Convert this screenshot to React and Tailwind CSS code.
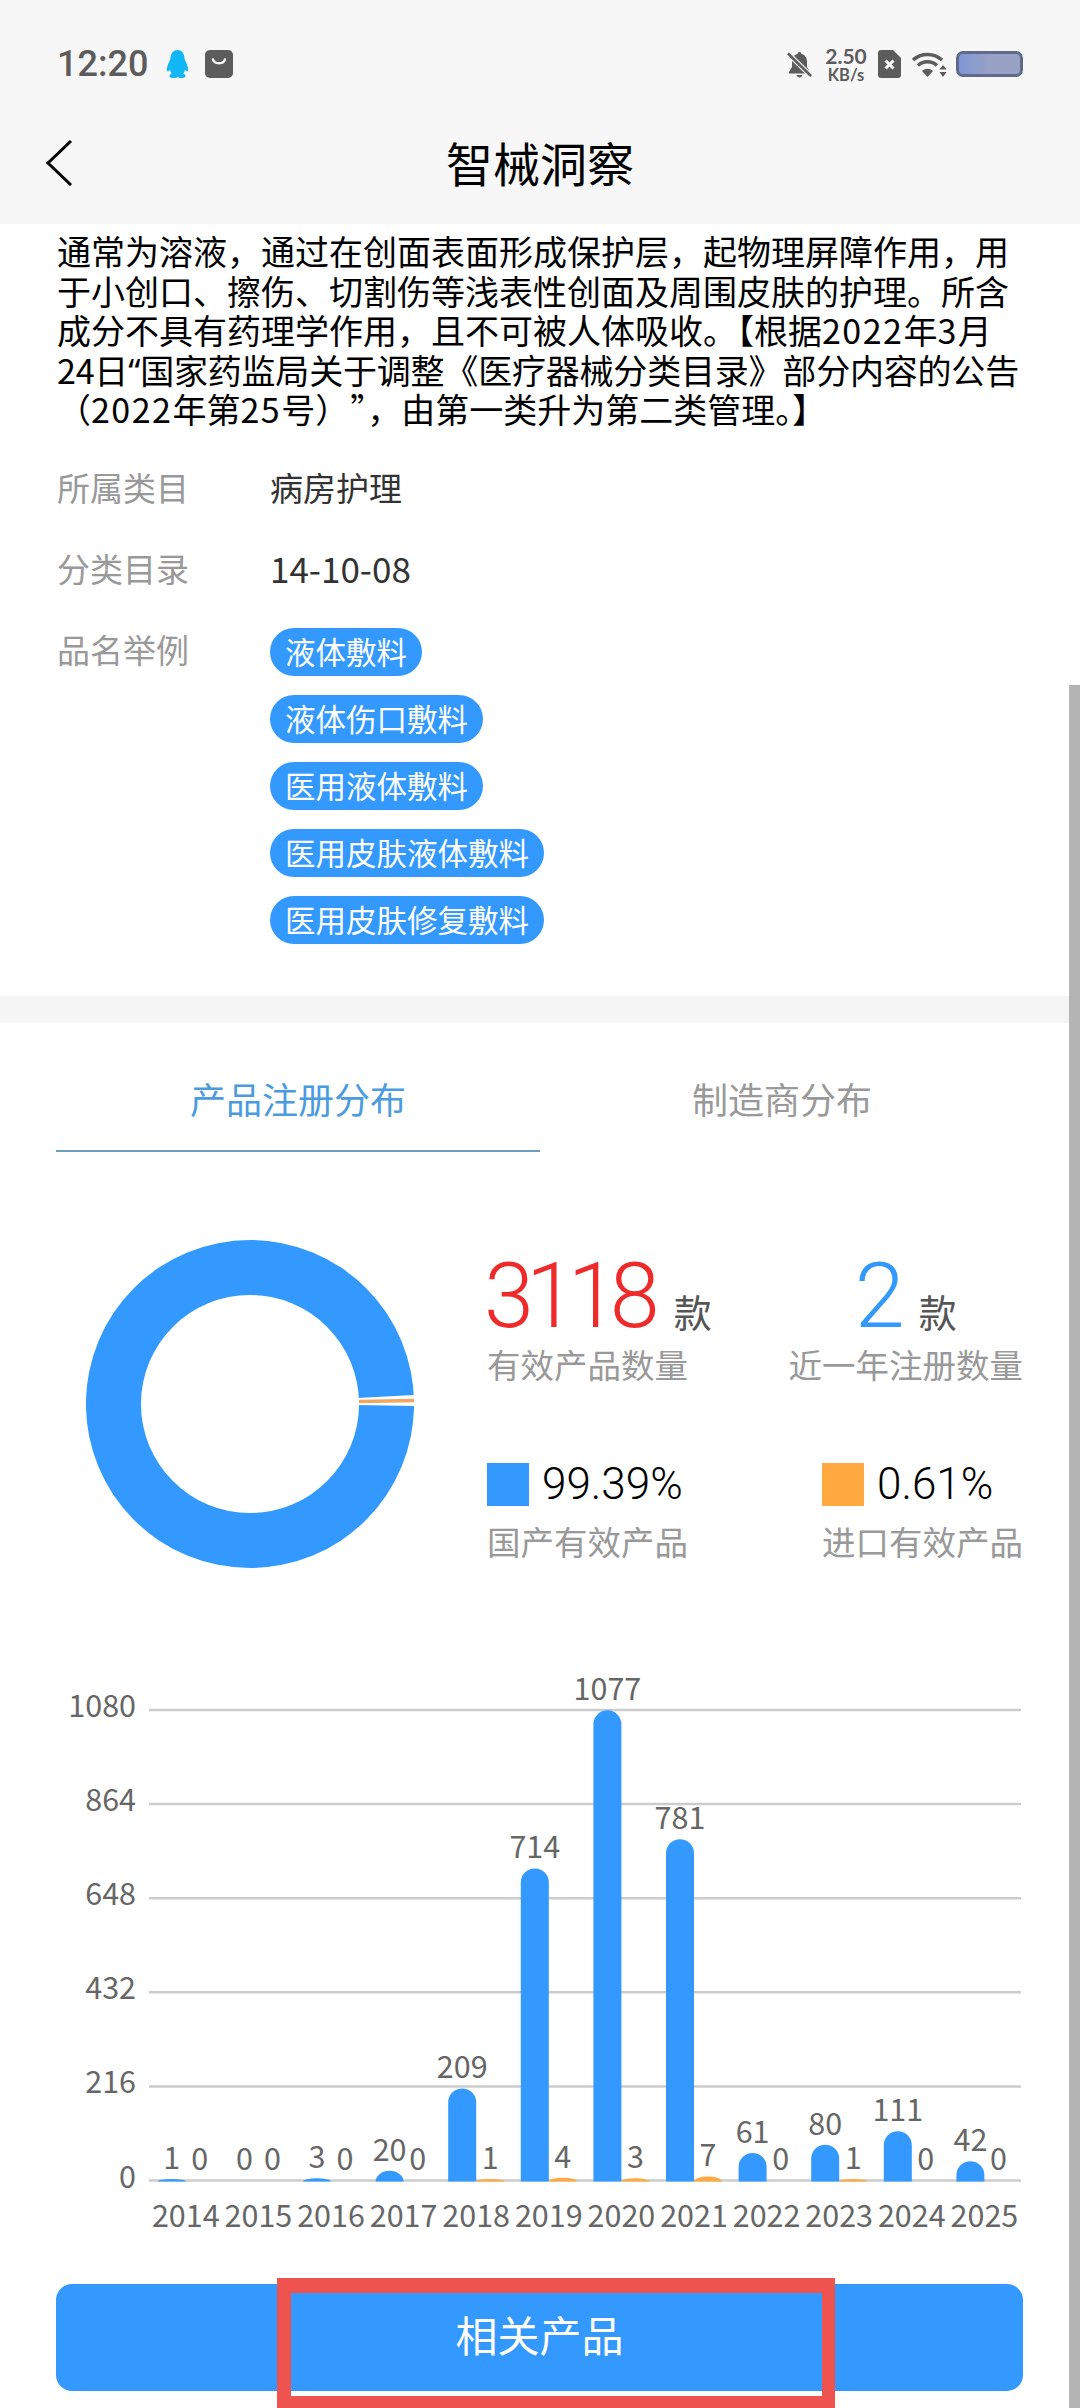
const cjk = "font-['Noto_Sans_CJK_SC','Noto_Sans',sans-serif]";

const comma = "\uFF0C";
const parenL = "\uFF08";
const parenR = "\uFF09";

const tags = ["液体敷料", "液体伤口敷料", "医用液体敷料", "医用皮肤液体敷料", "医用皮肤修复敷料"];

const chartData = [
  [2014, 1, 0],
  [2015, 0, 0],
  [2016, 3, 0],
  [2017, 20, 0],
  [2018, 209, 1],
  [2019, 714, 4],
  [2020, 1077, 3],
  [2021, 781, 7],
  [2022, 61, 0],
  [2023, 80, 1],
  [2024, 111, 0],
  [2025, 42, 0],
];

const yTicks = [1080, 864, 648, 432, 216, 0];

function barPath(cx, top, bottom) {
  const h = bottom - top;
  const ry = Math.min(14, h);
  return `M${cx - 14} ${bottom}V${top + ry}A14 ${ry} 0 0 1 ${cx + 14} ${top + ry}V${bottom}Z`;
}

function StatusBar() {
  return (
    <div className="flex h-[102px] items-start pl-[57px] pr-[57px] pt-[39px]">
      <div className="flex h-[50px] items-center">
        <span className="w-[109px] font-['Roboto',sans-serif] text-[36px] font-medium text-[#5c5c5c]">12:20</span>
        {/* QQ */}
        <svg width="23" height="28" viewBox="0 0 23 28">
          <path d="M11.5 0C6.5 0 4.6 4 4.4 9 3.6 11 1.6 14.5 1 18c-.3 2.2 0 3.5 1 3.4.6 0 1.3-.8 1.8-1.6.4 1.4 1 2.6 2 3.6C4.500 24 3 25 3.500 26.500c.4 1.200 2.500 1.500 4.500 1.500 1.500 0 2.800-.5 3.500-1.300.7.8 2 1.300 3.500 1.300 2 0 4.100-.3 4.500-1.500C20 25 18.500 24 17.200 23.400c1-1 1.600-2.200 2-3.600.5.8 1.200 1.600 1.800 1.600 1 .1 1.300-1.200 1-3.400-.6-3.500-2.600-7-3.400-9C18.400 4 16.500 0 11.500 0Z" fill="#12b7f5" />
        </svg>
        <svg className="ml-[16px]" width="28" height="28" viewBox="0 0 28 28">
          <rect width="28" height="28" rx="5" fill="#5c5c5c" />
          <path d="M8 9.500c1.500 5 10.500 5 12 0" fill="none" stroke="#fff" strokeWidth="2.500" strokeLinecap="round" />
        </svg>
      </div>
      <div className="ml-auto flex h-[50px] items-center">
        {/* muted bell */}
        <svg width="25" height="27" viewBox="0 0 25 27">
          <path d="M12.500 1c-1.200 0-2 .8-2 2C6.500 4 5 7 5 11v5l-3 5v1.500h21V21l-3-5v-5c0-4-1.500-7-5.500-8 0-1.200-.8-2-2-2ZM9.500 24c.5 1.500 1.600 2.500 3 2.500s2.500-1 3-2.500Z" fill="#5c5c5c" />
          <path d="M1 2.500 24 25" stroke="#f7f7f7" strokeWidth="5" />
          <path d="M1 2.500 24 25" stroke="#5c5c5c" strokeWidth="2.500" />
        </svg>
        <div className="ml-[11px] flex w-[46px] flex-col items-center font-['Lato',sans-serif] font-bold text-[#5c5c5c]">
          <span className="text-[21px] leading-[22px]">2.50</span>
          <span className="text-[16.500px] leading-[17px]">KB/s</span>
        </div>
        <svg className="ml-[9px]" width="23" height="28" viewBox="0 0 23 28">
          <path d="M3 0h12l8 8v17a3 3 0 0 1-3 3H3a3 3 0 0 1-3-3V3a3 3 0 0 1 3-3Z" fill="#5c5c5c" />
          <path d="M7.500 10.500l8 8M15.500 10.500l-8 8" stroke="#fff" strokeWidth="3" />
        </svg>
        <svg className="ml-[11px]" width="35" height="27" viewBox="0 0 35 27">
          <path d="M1 9C9 1.500 22 1.500 30 9" fill="none" stroke="#5c5c5c" strokeWidth="3.500" />
          <path d="M6 14.500c5.500-5 13.500-5 19 0" fill="none" stroke="#5c5c5c" strokeWidth="3.500" />
          <path d="M10 20c3.500-3 7.500-3 11 0l-5.500 6Z" fill="#5c5c5c" />
          <path d="M31 14l3.500 4.500h-7ZM31 26l3.500-5h-7Z" fill="#5c5c5c" />
        </svg>
        <div className="ml-[9px] h-[26px] w-[67px] rounded-[7px] border-[3px] border-[#5f6a8c] bg-gradient-to-r from-[#7f97d6] via-[#99a1c6] to-[#99a1c6]" />
      </div>
    </div>
  );
}

function NavBar() {
  return (
    <div className="grid h-[122px] grid-cols-[1fr_auto_1fr] items-center pb-[4px]">
      <svg className="ml-[45px] mt-[4px]" width="29" height="48" viewBox="0 0 29 48">
        <path d="M26 2 3 24l23 22" fill="none" stroke="#000" strokeWidth="3" />
      </svg>
      <span className="text-[47px] leading-none text-black">智械洞察</span>
    </div>
  );
}

function InfoRow({ label, children }) {
  return (
    <div className="flex min-h-[48px]">
      <span className="h-[48px] w-[213px] shrink-0 text-[33px] leading-[46px] text-[#999]">{label}</span>
      {children}
    </div>
  );
}

function Details() {
  const quote = "font-['Noto_Sans',sans-serif] leading-none";
  const digits = "tracking-[1.500px]";
  return (
    <div className="px-[57px] pb-[52px] pt-[7px]">
      <div className="whitespace-nowrap text-[34px] leading-[39.500px] text-black">
        <div>{`通常为溶液${comma}通过在创面表面形成保护层${comma}起物理屏障作用${comma}用`}</div>
        <div>于小创口、擦伤、切割伤等浅表性创面及周围皮肤的护理。所含</div>
        <div>
          {`成分不具有药理学作用${comma}且不可被人体吸收。【根据`}
          <span className={digits}>2022</span>年<span className={digits}>3</span>月
        </div>
        <div className="tracking-[-0.200px]">24日<span className={quote}>“</span>国家药监局关于调整《医疗器械分类目录》部分内容的公告</div>
        <div>
          {parenL}
          <span className={digits}>2022</span>年第<span className={digits}>25</span>
          {`号${parenR}`}
          <span className="ml-[18px]">{`”${comma}由第一类升为第二类管理。】`}</span>
        </div>
      </div>
      <div className="mt-[35.500px] flex flex-col gap-[33px]">
        <InfoRow label="所属类目">
          <span className="text-[33px] leading-[46px] text-[#333]">病房护理</span>
        </InfoRow>
        <InfoRow label="分类目录">
          <span className="text-[35px] leading-[46px] text-[#333]">14-10-08</span>
        </InfoRow>
        <InfoRow label="品名举例">
          <div className="flex flex-col items-start gap-[19px] pt-[2px]">
            {tags.map((tag) => (
              <span key={tag} className="h-[48px] rounded-full bg-[#3399ff] px-[15px] text-[30.500px] leading-[46px] text-white">
                {tag}
              </span>
            ))}
          </div>
        </InfoRow>
      </div>
    </div>
  );
}

function Tabs() {
  return (
    <div className="flex h-[129px] px-[56px]">
      <div className="w-[484px] border-b-2 border-[#6a9fc0] pt-[49px] text-center text-[36px] leading-[52px] text-[#4a9be0]">
        产品注册分布
      </div>
      <div className="w-[484px] pt-[49px] text-center text-[36px] leading-[52px] text-[#999]">
        制造商分布
      </div>
    </div>
  );
}

function Donut() {
  return (
    <svg className="shrink-0" width="328" height="328" viewBox="0 0 328 328">
      <path d="M164 0a164 164 0 1 0 0 328a164 164 0 1 0 0-328ZM164 55a109 109 0 1 1 0 218a109 109 0 1 1 0-218Z" fill="#3399ff" fillRule="evenodd" />
      <path d="M272 158 329 155V166L272 165Z" fill="#fff" />
      <path d="M273 161.500 329 160.500" stroke="#f0a860" strokeWidth="3.500" />
    </svg>
  );
}

function Stats() {
  return (
    <div className="mt-[88px] flex pl-[86px]">
      <Donut />
      <div className="ml-[73px] w-[536px] pt-[12px]">
        <div className="flex justify-between">
          <div>
            <div className="flex h-[90px] items-baseline">
              <span className="ml-[-3px] font-['Roboto',sans-serif] text-[90px] font-light leading-[90px] tracking-[-8px] text-[#ee2a2a]">3118</span>
              <span className="ml-[22px] text-[38px] leading-none text-[#555]">款</span>
            </div>
            <div className="h-[44px] text-[33.500px] leading-[44px] text-[#999]">有效产品数量</div>
          </div>
          <div className="flex flex-col items-center">
            <div className="flex h-[90px] items-baseline">
              <span className="font-['Roboto',sans-serif] text-[90px] font-light leading-[90px] text-[#3399ff]">2</span>
              <span className="ml-[14px] text-[38px] leading-none text-[#555]">款</span>
            </div>
            <div className="h-[44px] text-[33.500px] leading-[44px] text-[#999]">近一年注册数量</div>
          </div>
        </div>
        <div className="mt-[76px] flex justify-between">
          <div>
            <div className="flex h-[44px] items-center">
              <span className="h-[43px] w-[42px] bg-[#3399ff]" />
              <span className="ml-[13px] font-['Roboto',sans-serif] text-[44px] font-light leading-none text-black">99.39%</span>
            </div>
            <div className="mt-[13px] h-[44px] text-[33.500px] leading-[44px] text-[#999]">国产有效产品</div>
          </div>
          <div>
            <div className="flex h-[44px] items-center">
              <span className="h-[43px] w-[42px] bg-[#ffa940]" />
              <span className="ml-[13px] font-['Roboto',sans-serif] text-[44px] font-light leading-none text-black">0.61%</span>
            </div>
            <div className="mt-[13px] h-[44px] text-[33.500px] leading-[44px] text-[#999]">进口有效产品</div>
          </div>
        </div>
      </div>
    </div>
  );
}

function Chart() {
  const base = 2180.5;
  const unit = 470.5 / 1080;
  const textProps = { fontFamily: "'Noto Sans CJK SC', sans-serif", fontSize: 30.5, fill: "#666" };

  return (
    <svg className="mt-[102px] block" width="1080" height="570" viewBox="0 1670 1080 570">
      {yTicks.map((tick) => {
        const y = base - tick * unit;
        return (
          <g key={tick}>
            <line x1="149" x2="1021" y1={y} y2={y} stroke="#ccc" strokeWidth="2.500" />
            <text x="136" y={y + 7} textAnchor="end" {...textProps}>{tick}</text>
          </g>
        );
      })}
      {chartData.map(([year, blue, orange], i) => {
        const center = 149.5 + (i + 0.5) * 72.6;
        const blueTop = base - blue * unit;
        const orangeTop = base - orange * unit;
        return (
          <g key={year}>
            {/* tiny values still show as a thin strip over the axis */}
            {blue > 0 && <path d={barPath(center - 14, blueTop - 1, base + 1)} fill="#3399ff" />}
            {orange > 0 && <path d={barPath(center + 14, orangeTop - 1, base + 1)} fill="#ffa940" />}
            <text x={center - 14} y={blueTop - 11} textAnchor="middle" {...textProps}>{blue}</text>
            <text x={center + 14} y={orangeTop - 11} textAnchor="middle" {...textProps}>{orange}</text>
            <text x={center} y="2227" textAnchor="middle" {...textProps}>{year}</text>
          </g>
        );
      })}
    </svg>
  );
}

export default function App() {
  return (
    <div className={`relative h-[2408px] w-[1080px] overflow-hidden bg-white ${cjk}`}>
      <header className="h-[224px] bg-[#f7f7f7]">
        <StatusBar />
        <NavBar />
      </header>
      <Details />
      <div className="h-[27px] bg-[#f5f5f5]" />
      <Tabs />
      <Stats />
      <Chart />
      <button className="mx-[56px] mt-[44px] block h-[107px] w-[967px] rounded-[16px] bg-[#3399ff] pb-[8px] text-[42px] text-white">
        相关产品
      </button>
      {/* scrollbar + review highlight sit over the page */}
      <div className="absolute bottom-0 right-0 top-[685px] w-[11px] bg-[#b4b4b4]" />
      <div className="absolute bottom-0 left-[277px] top-[2278px] w-[558px] border-b-[12px] border-l-[14px] border-r-[13px] border-t-[15px] border-[#ef5350]" />
    </div>
  );
}
